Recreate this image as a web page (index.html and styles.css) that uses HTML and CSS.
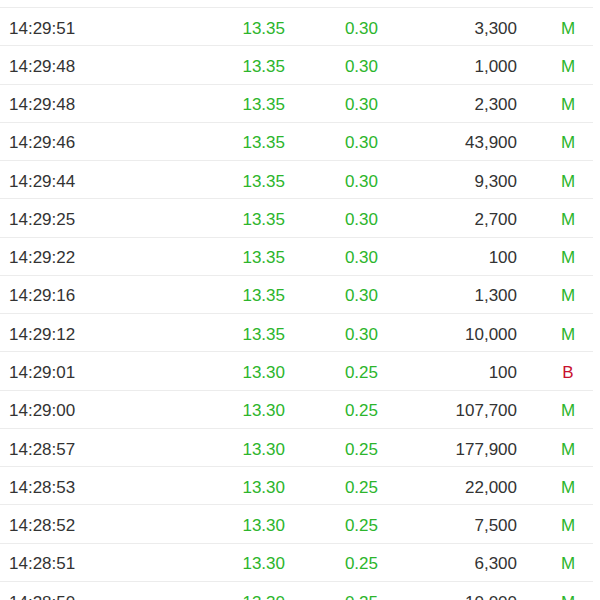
FILE: index.html
```html
<!DOCTYPE html>
<html>
<head>
<meta charset="utf-8">
<link rel="stylesheet" href="styles.css">
</head>
<body>
<div class="list">
  <div class="row"><span class="time">14:29:51</span><span class="price up">13.35</span><span class="chg up">0.30</span><span class="vol">3,300</span><span class="flag up">M</span></div>
  <div class="row"><span class="time">14:29:48</span><span class="price up">13.35</span><span class="chg up">0.30</span><span class="vol">1,000</span><span class="flag up">M</span></div>
  <div class="row"><span class="time">14:29:48</span><span class="price up">13.35</span><span class="chg up">0.30</span><span class="vol">2,300</span><span class="flag up">M</span></div>
  <div class="row"><span class="time">14:29:46</span><span class="price up">13.35</span><span class="chg up">0.30</span><span class="vol">43,900</span><span class="flag up">M</span></div>
  <div class="row"><span class="time">14:29:44</span><span class="price up">13.35</span><span class="chg up">0.30</span><span class="vol">9,300</span><span class="flag up">M</span></div>
  <div class="row"><span class="time">14:29:25</span><span class="price up">13.35</span><span class="chg up">0.30</span><span class="vol">2,700</span><span class="flag up">M</span></div>
  <div class="row"><span class="time">14:29:22</span><span class="price up">13.35</span><span class="chg up">0.30</span><span class="vol">100</span><span class="flag up">M</span></div>
  <div class="row"><span class="time">14:29:16</span><span class="price up">13.35</span><span class="chg up">0.30</span><span class="vol">1,300</span><span class="flag up">M</span></div>
  <div class="row"><span class="time">14:29:12</span><span class="price up">13.35</span><span class="chg up">0.30</span><span class="vol">10,000</span><span class="flag up">M</span></div>
  <div class="row"><span class="time">14:29:01</span><span class="price up">13.30</span><span class="chg up">0.25</span><span class="vol">100</span><span class="flag down">B</span></div>
  <div class="row"><span class="time">14:29:00</span><span class="price up">13.30</span><span class="chg up">0.25</span><span class="vol">107,700</span><span class="flag up">M</span></div>
  <div class="row"><span class="time">14:28:57</span><span class="price up">13.30</span><span class="chg up">0.25</span><span class="vol">177,900</span><span class="flag up">M</span></div>
  <div class="row"><span class="time">14:28:53</span><span class="price up">13.30</span><span class="chg up">0.25</span><span class="vol">22,000</span><span class="flag up">M</span></div>
  <div class="row"><span class="time">14:28:52</span><span class="price up">13.30</span><span class="chg up">0.25</span><span class="vol">7,500</span><span class="flag up">M</span></div>
  <div class="row"><span class="time">14:28:51</span><span class="price up">13.30</span><span class="chg up">0.25</span><span class="vol">6,300</span><span class="flag up">M</span></div>
  <div class="row"><span class="time">14:28:50</span><span class="price up">13.30</span><span class="chg up">0.25</span><span class="vol">10,000</span><span class="flag up">M</span></div>
</div>
</body>
</html>
```
FILE: styles.css
```css
html, body {
  margin: 0;
  padding: 0;
  background: #ffffff;
  overflow: hidden;
}
body {
  font-family: "Liberation Sans", Arial, sans-serif;
  font-size: 17px;
  color: #333333;
}
.list {
  padding-top: 7px;
}
.row {
  display: grid;
  grid-template-columns: 200px 76px 93px 139px 21px 60px;
  align-items: center;
  height: 38.27px;
  box-sizing: border-box;
  padding-left: 9px;
  padding-top: 4px;
  border-top: 1.5px solid #ececec;
  margin-right: 7px;
}
.time { grid-column: 1; }
.price { grid-column: 2; text-align: right; }
.chg { grid-column: 3; text-align: right; }
.vol { grid-column: 4; text-align: right; }
.flag { grid-column: 6; text-align: center; }
.up { color: #2cb52c; }
.down { color: #c8102e; }
```
